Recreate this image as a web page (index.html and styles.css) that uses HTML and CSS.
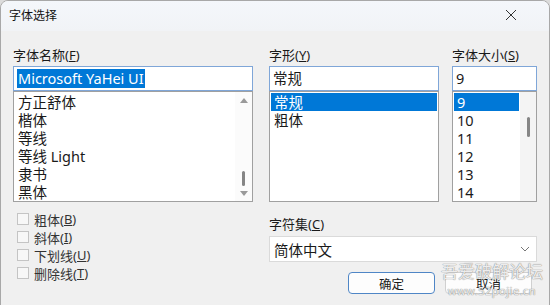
FILE: index.html
```html
<!DOCTYPE html>
<html lang="zh-CN">
<head>
    <meta charset="UTF-8">
    <title>字体选择</title>
    <link rel="stylesheet" href="styles.css">
</head>
<body>
<div class="window">
    <div class="titlebar">
        <span class="title">字体选择</span>
        <svg class="close" width="12" height="12" viewBox="0 0 12 12">
            <path d="M1 1 L11 11 M11 1 L1 11" stroke="#333" stroke-width="1" fill="none"/>
        </svg>
    </div>

    <div class="content">
        <!-- Top row: name / style / size -->
        <div class="fields">
            <div class="field name-field">
                <div class="label">字体名称(<u>F</u>)</div>
                <div class="input"><span class="selected-text">Microsoft YaHei UI</span></div>
                <div class="list">
                    <ul class="items">
                        <li>方正舒体</li>
                        <li>楷体</li>
                        <li>等线</li>
                        <li>等线 Light</li>
                        <li>隶书</li>
                        <li>黑体</li>
                    </ul>
                    <div class="scrollbar">
                        <span class="arrow up"></span>
                        <span class="thumb name-thumb"></span>
                        <span class="arrow down"></span>
                    </div>
                </div>
            </div>

            <div class="field style-field">
                <div class="label">字形(<u>Y</u>)</div>
                <div class="input">常规</div>
                <div class="list">
                    <ul class="items">
                        <li class="active">常规</li>
                        <li>粗体</li>
                    </ul>
                </div>
            </div>

            <div class="field size-field">
                <div class="label">字体大小(<u>S</u>)</div>
                <div class="input">9</div>
                <div class="list">
                    <ul class="items">
                        <li class="active">9</li>
                        <li>10</li>
                        <li>11</li>
                        <li>12</li>
                        <li>13</li>
                        <li>14</li>
                    </ul>
                    <div class="scrollbar plain">
                        <span class="thumb size-thumb"></span>
                    </div>
                </div>
            </div>
        </div>

        <!-- Bottom row: effects / charset / buttons -->
        <div class="bottom">
            <div class="effects">
                <label class="check"><span class="box"></span>粗体(<u>B</u>)</label>
                <label class="check"><span class="box"></span>斜体(<u>I</u>)</label>
                <label class="check"><span class="box"></span>下划线(<u>U</u>)</label>
                <label class="check"><span class="box"></span>删除线(<u>T</u>)</label>
            </div>

            <div class="charset">
                <div class="label">字符集(<u>C</u>)</div>
                <div class="select">
                    <span>简体中文</span>
                    <svg width="10" height="6" viewBox="0 0 10 6">
                        <path d="M1 1 L5 5 L9 1" stroke="#777" stroke-width="1" fill="none"/>
                    </svg>
                </div>
                <div class="buttons">
                    <button class="btn primary">确定</button>
                    <button class="btn">取消</button>
                </div>
            </div>
        </div>
    </div>

    <div class="watermark">
        <div class="wm-big">吾爱破解论坛</div>
        <div class="wm-small">www.52pojie.cn</div>
    </div>
</div>
</body>
</html>
```

FILE: styles.css
```css
* {
    margin: 0;
    padding: 0;
    box-sizing: border-box;
}

body {
    width: 550px;
    height: 305px;
    overflow: hidden;
    background: #dcdcdc;
    font-family: "Noto Sans", "Noto Sans CJK SC", sans-serif;
    color: #1a1a1a;
}

.window {
    position: relative;
    width: 550px;
    height: 310px;
    background: #f0f0f0;
    border: 1px solid #a8a8a8;
    border-radius: 8px 8px 0 0;
    overflow: hidden;
}

/* Title bar */
.titlebar {
    height: 30px;
    display: flex;
    align-items: center;
    justify-content: space-between;
    padding: 0 32px 2px 8px;
    background: linear-gradient(#f4f7fb, #f1f3f6);
}

.title {
    font-size: 12px;
    color: #111;
}

/* Main content */
.content {
    padding: 15px 0 0 12px;
}

.fields {
    display: flex;
}

.field {
    display: flex;
    flex-direction: column;
}

.name-field { width: 240px; }
.style-field { width: 170px; margin-left: 16px; }
.size-field { width: 85px; margin-left: 13px; }

.label {
    font-size: 13px;
    line-height: 18px;
    height: 20px;
    color: #1a1a1a;
}

.input {
    height: 25px;
    background: #fff;
    border: 1px solid #7fa6d8;
    font-size: 14.5px;
    line-height: 22px;
    padding-left: 3px;
    white-space: nowrap;
    overflow: hidden;
}

.selected-text {
    background: #0078d7;
    color: #fff;
    display: inline-block;
    line-height: 19px;
    padding: 0 1px;
}

.list {
    position: relative;
    height: 111px;
    background: #fff;
    border: 1px solid #a0a0a0;
    display: flex;
}

.items {
    list-style: none;
    flex: 1;
    padding: 1px 1px 0 1px;
}

.items li {
    height: 18px;
    line-height: 18px;
    font-size: 14.5px;
    padding-left: 3px;
    white-space: nowrap;
}

.items li.active {
    background: #0078d7;
    color: #fff;
}

.scrollbar {
    width: 17px;
    display: flex;
    flex-direction: column;
    align-items: center;
    justify-content: space-between;
    padding: 6px 0 5px;
    background: #fbfbfb;
}

.scrollbar.plain {
    background: #f4f4f4;
    justify-content: flex-start;
    padding-top: 25px;
    width: 16px;
}

.arrow {
    width: 0;
    height: 0;
    border-left: 4px solid transparent;
    border-right: 4px solid transparent;
}

.arrow.up { border-bottom: 5px solid #9a9a9a; }
.arrow.down { border-top: 5px solid #9a9a9a; }

.thumb {
    width: 3px;
    background: #858585;
    border-radius: 2px;
}

.name-thumb {
    height: 15px;
    margin: 62px 0 0 0;
}

.size-thumb {
    height: 20px;
}

/* Bottom section */
.bottom {
    display: flex;
    margin-top: 8px;
}

.effects {
    width: 240px;
    padding-left: 4px;
    display: flex;
    flex-direction: column;
}

.check {
    display: flex;
    align-items: center;
    height: 18px;
    font-size: 13px;
    color: #333;
}

.box {
    width: 12px;
    height: 12px;
    border: 1px solid #c4c4c4;
    background: #f7f7f7;
    margin-right: 5px;
}

.charset {
    width: 268px;
    margin-left: 16px;
    padding-top: 5px;
}

.charset .label {
    height: 21px;
}

.select {
    height: 26px;
    background: #fff;
    border: 1px solid #dadada;
    display: flex;
    align-items: center;
    justify-content: space-between;
    padding: 0 6px 0 4px;
    font-size: 14.5px;
}

.buttons {
    display: flex;
    justify-content: flex-end;
    gap: 10px;
    margin-top: 10px;
    padding-right: 5px;
}

.btn {
    width: 87px;
    height: 22px;
    font-family: "Noto Sans CJK SC", sans-serif;
    font-size: 12.5px;
    background: #fdfdfd;
    border: 1px solid #d0d0d0;
    border-radius: 4px;
    color: #1a1a1a;
}

.btn.primary {
    border: 1.5px solid #4f86c6;
}

/* Watermark over the corner */
.watermark {
    position: absolute;
    left: 440px;
    top: 259px;
    text-align: center;
    color: rgba(255, 255, 255, 0.85);
    text-shadow: 0 0 1px #8a8a8a, 0 0 1px #8a8a8a;
    pointer-events: none;
}

.wm-big {
    font-size: 17px;
    line-height: 22px;
    height: 24px;
    font-family: "Noto Sans CJK SC", sans-serif;
}

.wm-small {
    font-size: 11px;
    line-height: 13px;
    letter-spacing: 0.5px;
}
```
